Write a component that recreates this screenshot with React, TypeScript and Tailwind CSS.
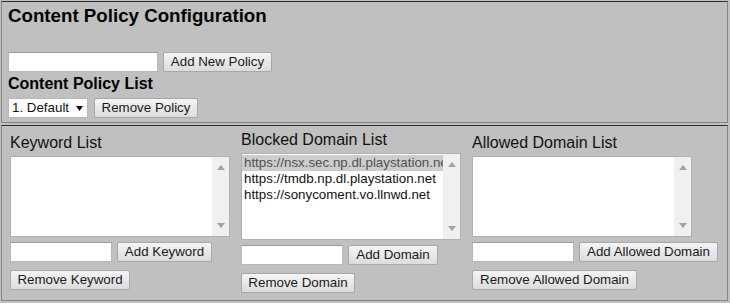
const font = "font-['Liberation_Sans',Arial,sans-serif]";

function Btn({ label, w }: { label: string; w: string }) {
  return (
    <button
      className={`${w} h-[20px] shrink-0 rounded-[2px] border border-[#a8a8a8] bg-gradient-to-b from-[#f5f5f5] to-[#dcdcdc] px-[6px] text-[13.33px] leading-[18px] text-[#1a1a1a] whitespace-nowrap`}
    >
      {label}
    </button>
  );
}

function Field({ w }: { w: string }) {
  return <div className={`${w} h-[20px] shrink-0 border border-[#b8b8b8] border-t-[#9a9a9a] bg-white`} />;
}

function ScrollBar() {
  return (
    <div className="flex w-[17px] shrink-0 flex-col items-center justify-between bg-[#f0f0f0] py-[8px]">
      <svg width="8" height="5" viewBox="0 0 8 5">
        <path d="M0 5 L4 0 L8 5 Z" fill="#a3a3a3" />
      </svg>
      <svg width="8" height="5" viewBox="0 0 8 5">
        <path d="M0 0 L8 0 L4 5 Z" fill="#a3a3a3" />
      </svg>
    </div>
  );
}

function ListBox({ items, h }: { items: string[]; h: string }) {
  return (
    <div className={`flex w-[220px] ${h} border border-[#b0b0b0] bg-white`}>
      <div className="min-w-0 flex-1 overflow-hidden pt-[1px]">
        {items.map((it, i) => (
          <div
            key={it}
            className={`h-[16px] overflow-hidden whitespace-nowrap pl-[2px] text-[13.33px] leading-[16px] ${
              i === 0 ? "bg-[#cdcdcd] text-[#505050]" : "text-[#111]"
            }`}
          >
            {it}
          </div>
        ))}
      </div>
      <ScrollBar />
    </div>
  );
}

const columns = [
  {
    title: "Keyword List",
    items: [] as string[],
    add: "Add Keyword",
    addW: "w-[95px]",
    remove: "Remove Keyword",
    removeW: "w-[120px]",
    pad: "pt-[5px]",
    h: "h-[81px]",
  },
  {
    title: "Blocked Domain List",
    items: [
      "https://nsx.sec.np.dl.playstation.net",
      "https://tmdb.np.dl.playstation.net",
      "https://sonycoment.vo.llnwd.net",
    ],
    add: "Add Domain",
    addW: "w-[90px]",
    remove: "Remove Domain",
    removeW: "w-[114px]",
    pad: "pt-[2px]",
    h: "h-[87px]",
  },
  {
    title: "Allowed Domain List",
    items: [] as string[],
    add: "Add Allowed Domain",
    addW: "w-[139px]",
    remove: "Remove Allowed Domain",
    removeW: "w-[165px]",
    pad: "pt-[5px]",
    h: "h-[81px]",
  },
];

export default function App() {
  return (
    <div className={`${font} h-[303px] w-[730px] bg-[#c0c0c0] p-[1px] text-black`}>
      <section className="h-[122px] w-[727px] border border-[#858585] border-t-[#2e2e2e] px-[6px] pt-[3px]">
        <h3 className="text-[18.72px] font-bold leading-[22px]">Content Policy Configuration</h3>
        <div className="mt-[25px] flex gap-[5px]">
          <Field w="w-[150px]" />
          <Btn label="Add New Policy" w="w-[109px]" />
        </div>
        <p className="mt-[3px] text-[16px] font-bold leading-[18px]">Content Policy List</p>
        <div className="mt-[5px] flex gap-[6px]">
          <div className="flex h-[20px] w-[80px] items-center justify-between border border-[#b8b8b8] bg-white pl-[3px] pr-[4px] text-[13.33px] text-[#111]">
            <span>1. Default</span>
            <svg width="7" height="5" viewBox="0 0 7 5">
              <path d="M0 0 L7 0 L3.5 5 Z" fill="#111" />
            </svg>
          </div>
          <Btn label="Remove Policy" w="w-[104px]" />
        </div>
      </section>
      <section className="mt-[2px] flex h-[176px] w-[727px] border border-[#858585] border-t-[#2e2e2e] pl-[8px] pt-[3px]">
        {columns.map((c) => (
          <div key={c.title} className={`w-[231px] shrink-0 ${c.pad}`}>
            <h4 className="text-[16px] leading-[18px] text-[#111]">{c.title}</h4>
            <div className="mt-[4px]">
              <ListBox items={c.items} h={c.h} />
            </div>
            <div className="mt-[5px] flex items-start gap-[5px]">
              <Field w="w-[102px]" />
              <Btn label={c.add} w={c.addW} />
            </div>
            <div className="mt-[5px]">
              <Btn label={c.remove} w={c.removeW} />
            </div>
          </div>
        ))}
      </section>
    </div>
  );
}
